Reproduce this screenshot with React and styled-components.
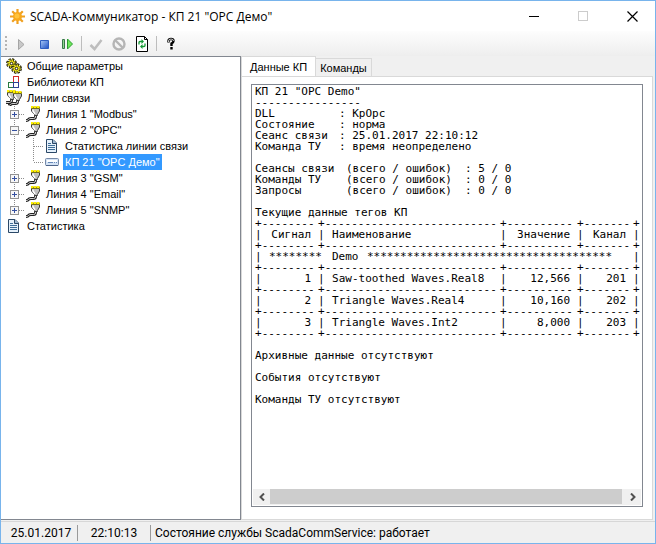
import React, { useState } from "react";
import styled, { createGlobalStyle } from "styled-components";

const Global = createGlobalStyle`
  *, *::before, *::after { box-sizing: border-box; }
  body { margin: 0; background: #f0f0f0; }
  button { border: 0; padding: 0; background: none; font: inherit; color: inherit; }
  svg { display: block; }
`;

const Window = styled.div`
  height: 100vh;
  display: flex;
  flex-direction: column;
  background: #f0f0f0;
  border: 1px solid #78b4ec;
  color: #000;
  font: 11px "Liberation Sans", Arial, sans-serif;
`;

const TitleBar = styled.header`
  flex: none;
  height: 30px;
  display: flex;
  align-items: center;
  gap: 4px;
  padding-left: 8px;
  background: #fff;
`;

const Title = styled.h1`
  flex: 1;
  margin: 0;
  font: 12px "Open Sans", "Noto Sans", sans-serif;
  white-space: nowrap;
`;

const CaptionButton = styled.button`
  width: 45px;
  height: 29px;
  display: grid;
  place-items: center;
`;

const Toolbar = styled.div`
  flex: none;
  height: 25px;
  display: flex;
  align-items: center;
  padding-left: 4px;
  background: linear-gradient(#fdfdfd, #eeeeee);
`;

const Grip = styled.span`
  width: 2px;
  height: 16px;
  margin-right: 2px;
  background: repeating-linear-gradient(#b4b4b4 0 2px, transparent 2px 4px);
`;

const ToolButton = styled.button`
  width: 23px;
  height: 22px;
  display: grid;
  place-items: center;
`;

const ToolSeparator = styled.span`
  width: 1px;
  height: 15px;
  margin: 0 2px 0 3px;
  background: #bdbdbd;
`;

const Main = styled.main`
  flex: 1;
  min-height: 0;
  display: grid;
  grid-template-columns: 240px minmax(0, 1fr);
`;

const Tree = styled.nav`
  border: solid #828790;
  border-width: 1px 1px 1px 0;
  background: #fff;
  padding: 1px 0 0 5px;
  overflow: hidden;
`;

const TreeRow = styled.div`
  height: 16px;
  display: flex;
  align-items: center;
`;

const IconCell = styled.span`
  flex: none;
  width: 19px;
`;

const TreeLabel = styled.button`
  height: 16px;
  padding: 0 2px;
  line-height: 16px;
  white-space: nowrap;
  background: ${(p) => (p.$selected ? "#3399ff" : "transparent")};
  color: ${(p) => (p.$selected ? "#fff" : "#000")};
`;

const Tabs = styled.section`
  min-width: 0;
  display: flex;
  flex-direction: column;
  padding-right: 2px;
`;

const TabList = styled.div`
  flex: none;
  height: 20px;
  display: flex;
  align-items: flex-end;
`;

const Tab = styled.button`
  height: ${(p) => (p.$active ? "21px" : "18px")};
  margin-bottom: ${(p) => (p.$active ? "-1px" : "0")};
  padding: 0 ${(p) => (p.$active ? "8px" : "4px")};
  border: 1px solid #d9d9d9;
  border-bottom: 0;
  border-left-width: ${(p) => (p.$active ? "1px" : "0")};
  background: ${(p) => (p.$active ? "#fff" : "#f0f0f0")};
  white-space: nowrap;
`;

const TabPanel = styled.div`
  flex: 1;
  min-height: 0;
  display: flex;
  padding: 7px 9px 12px;
  border: 1px solid #d9d9d9;
  background: #fff;
`;

const LogBox = styled.div`
  flex: 1;
  min-width: 0;
  display: flex;
  flex-direction: column;
  border: 1px solid #828790;
  padding: 1px;
`;

const Log = styled.div`
  flex: 1;
  min-height: 0;
  padding: 0 2px;
  overflow: hidden;
  font: 11px/11px "DejaVu Sans Mono", "Liberation Mono", monospace;
`;

const LogLine = styled.div`
  height: 11px;
  display: flex;
  white-space: pre;
`;

const LogLabel = styled.span`
  flex: none;
  width: ${(p) => p.$width};
`;

const TagTable = styled.table`
  width: 385px;
  table-layout: fixed;
  border-collapse: collapse;
  white-space: pre;

  th, td {
    height: 11px;
    padding: 0;
    font-weight: normal;
    text-align: left;
  }
`;

const Value = styled.td`
  && {
    text-align: right;
    padding-right: 7px;
  }
`;

const Marker = styled.span`
  display: inline-block;
  width: ${(p) => p.$width};
`;

const ScrollBar = styled.div`
  flex: none;
  height: 16px;
  display: flex;
  background: #f0f0f0;
`;

const ScrollButton = styled.button`
  width: 17px;
  display: grid;
  place-items: center;
`;

const ScrollThumb = styled.div`
  flex: 1;
  margin: 0 2px 1px 0;
  background: #cdcdcd;
`;

const StatusBar = styled.footer`
  flex: none;
  height: 22px;
  display: flex;
  align-items: center;
  border-top: 1px solid #d7d7d7;
  margin-top: 1px;
  padding-left: 4px;
  font: 12px Roboto, "Open Sans", sans-serif;
`;

const StatusItem = styled.span`
  width: ${(p) => p.$width || "auto"};
  padding: 0 4px;
  text-align: center;
  white-space: nowrap;
  border-left: ${(p) => (p.$divided ? "1px solid #9a9a9a" : "0")};
  line-height: 16px;
`;

const SunIcon = () => (
  <svg width="17" height="17" viewBox="0 0 17 17" aria-hidden="true">
    <path d="M8.5 1v15M1 8.500h15M3.200 3.200l10.600 10.600M13.800 3.200 3.200 13.800" stroke="#f0a020" strokeWidth="2.200" />
    <circle cx="8.500" cy="8.500" r="4.500" fill="#f8a81c" />
    <circle cx="8" cy="8" r="2.500" fill="#ffc23c" />
  </svg>
);

const Gear = ({ cx, cy }) => (
  <g>
    <circle cx={cx} cy={cy} r="4.300" fill="none" stroke="#1c1a04" strokeWidth="2.200" strokeDasharray="2.200 1.177" />
    <circle cx={cx} cy={cy} r="3.400" fill="#f0e61c" stroke="#1c1a04" strokeWidth="1" />
    <circle cx={cx} cy={cy} r="3.500" fill="none" stroke="#f6ec2a" strokeWidth="1.600" strokeDasharray="1.300 1.449" />
    <circle cx={cx} cy={cy} r="1.300" fill="#fff" stroke="#1c1a04" strokeWidth="1" />
  </g>
);

const GearsIcon = () => (
  <svg width="16" height="16" viewBox="0 0 16 16" aria-hidden="true">
    <Gear cx={5.5} cy={5.5} />
    <Gear cx={10.5} cy={10.5} />
  </svg>
);

const LibraryIcon = () => (
  <svg width="16" height="16" viewBox="0 0 16 16" fill="none" shapeRendering="crispEdges" aria-hidden="true">
    <path d="M7.500 2.500h5v6h-5z" stroke="#d42a2a" />
    <path d="M2.500 8.500h5v5h-5z" stroke="#287a40" />
    <path d="M7.500 8.500h5v5h-5z" stroke="#2f3f94" />
  </svg>
);

const PlugShape = () => (
  <>
    <path d="M10.500 9v2q0 1.500-2 1.500H6q-2 0-2.500 1T1 14.500" fill="none" stroke="#222" strokeWidth="2.800" />
    <path d="M10.500 9v2q0 1.500-2 1.500H6q-2 0-2.500 1T1 14.500" fill="none" stroke="#d0d0d0" strokeWidth="1" />
    <path d="M6.500 2.500h8V5l-2 3.500v1h-3v-1L6.500 5z" fill="#bebebe" stroke="#3c3c3c" />
    <path d="M8 3.500v1.500l2 3" fill="none" stroke="#fff" strokeWidth="1.500" />
    <path d="M6 1.500h9" stroke="#b3a600" strokeWidth="2" />
    <path d="M6 1h9" stroke="#fff000" strokeWidth="2" strokeDasharray="2 1" />
  </>
);

const PlugIcon = () => (
  <svg width="16" height="16" viewBox="0 0 16 16" aria-hidden="true"><PlugShape /></svg>
);

const PlugsIcon = () => (
  <svg width="17" height="16" viewBox="0 0 17 16" aria-hidden="true">
    <g transform="translate(-5)"><PlugShape /></g>
    <g transform="translate(1 1)"><PlugShape /></g>
  </svg>
);

const PageIcon = () => (
  <svg width="16" height="16" viewBox="0 0 16 16" aria-hidden="true">
    <path d="M2.500 1.500h6.500l3.500 3.500v9.500h-10z" fill="#e6f1fb" stroke="#2b4867" />
    <path d="M8.500 1.500v4h4" fill="#9db9d3" stroke="#2b4867" />
    <path d="M4 5.500h3M4 7.500h7M4 9.500h7M4 11.500h7" stroke="#3e6d98" />
  </svg>
);

const DeviceIcon = () => (
  <svg width="16" height="16" viewBox="0 0 16 16" aria-hidden="true">
    <rect x="1.500" y="4.500" width="13" height="7" rx="1" fill="#d4e3f5" stroke="#7589a8" />
    <path d="M2 11.500h12" stroke="#4d6388" />
    <path d="M3 7h10" stroke="#fff" strokeWidth="2" />
    <path d="M4 8.500h5M10 8.500h1M12 8.500h1" stroke="#6688b8" />
  </svg>
);

const icons = { gears: GearsIcon, library: LibraryIcon, plugs: PlugsIcon, plug: PlugIcon, page: PageIcon, device: DeviceIcon };

function Guide({ kind, last }) {
  return (
    <svg width="19" height="16" viewBox="0 0 19 16" fill="none" shapeRendering="crispEdges" aria-hidden="true">
      <path d={last ? "M8.500 0v8" : "M8.500 0v16"} stroke="#8c8c8c" strokeDasharray="1 1" />
      {kind !== "line" && <path d="M9 8.500h10" stroke="#8c8c8c" strokeDasharray="1 1" />}
      {(kind === "plus" || kind === "minus") && (
        <>
          <rect x="4.500" y="4.500" width="8" height="8" fill="#f7f7f7" stroke="#929292" />
          <path d={kind === "plus" ? "M6 8.500h5M8.500 6v5" : "M6 8.500h5"} stroke="#3550a0" />
        </>
      )}
    </svg>
  );
}

const nodes = [
  { icon: "gears", text: "Общие параметры", guides: [] },
  { icon: "library", text: "Библиотеки КП", guides: [] },
  { icon: "plugs", text: "Линии связи", guides: [] },
  { icon: "plug", text: 'Линия 1 "Modbus"', guides: ["plus"] },
  { icon: "plug", text: 'Линия 2 "OPC"', guides: ["minus"] },
  { icon: "page", text: "Статистика линии связи", guides: ["line", "tee"] },
  { icon: "device", text: 'КП 21 "OPC Демо"', guides: ["line", "tee"], last: true },
  { icon: "plug", text: 'Линия 3 "GSM"', guides: ["plus"] },
  { icon: "plug", text: 'Линия 4 "Email"', guides: ["plus"] },
  { icon: "plug", text: 'Линия 5 "SNMP"', guides: ["plus"], last: true },
  { icon: "page", text: "Статистика", guides: [] },
];

const state = [
  ["DLL", ": КрОрс"],
  ["Состояние", ": норма"],
  ["Сеанс связи", ": 25.01.2017 22:10:12"],
  ["Команда ТУ", ": время неопределено"],
];

const counters = [
  ["Сеансы связи", ": 5 / 0"],
  ["Команды ТУ", ": 0 / 0"],
  ["Запросы", ": 0 / 0"],
];

const tags = [
  ["1", "Saw-toothed Waves.Real8", "12,566", "201"],
  ["2", "Triangle Waves.Real4", "10,160", "202"],
  ["3", "Triangle Waves.Int2", "8,000", "203"],
];

const columnWidths = [14, 49, 14, 168, 14, 63, 14, 42, 7];

const Column = styled.col`
  width: ${(p) => p.$width}px;
`;

const Rule = () => (
  <tr>
    {[8, 26, 10, 7].map((n) => (
      <td key={n} colSpan={2}>+{"-".repeat(n)}</td>
    ))}
    <td>+</td>
  </tr>
);

function TagRow({ cells, header }) {
  const Name = header ? "th" : "td";
  return (
    <tr>
      <td>|</td>
      <Value as={Name}>{cells[0]}</Value>
      <td>|</td>
      <Name>{cells[1]}</Name>
      <td>|</td>
      <Value as={Name}>{cells[2]}</Value>
      <td>|</td>
      <Value as={Name}>{cells[3]}</Value>
      <td>|</td>
    </tr>
  );
}

export default function App() {
  const [selected, setSelected] = useState(6);
  return (
    <>
      <Global />
      <Window>
        <TitleBar>
          <SunIcon />
          <Title>SCADA-Коммуникатор - КП 21 "ОРС Демо"</Title>
          <CaptionButton aria-label="Свернуть">
            <svg width="11" height="11" shapeRendering="crispEdges"><path d="M0 5.500h10" stroke="#000" /></svg>
          </CaptionButton>
          <CaptionButton aria-label="Развернуть" disabled>
            <svg width="11" height="11" shapeRendering="crispEdges"><path d="M.5 .5h9v9h-9z" fill="none" stroke="#ccc" /></svg>
          </CaptionButton>
          <CaptionButton aria-label="Закрыть">
            <svg width="11" height="11"><path d="m.5.5 10 10m0-10-10 10" stroke="#000" strokeWidth="1.200" /></svg>
          </CaptionButton>
        </TitleBar>

        <Toolbar role="toolbar">
          <Grip />
          <ToolButton aria-label="Запустить" disabled>
            <svg width="16" height="16"><path d="M5.500 3.500 11 8.500l-5.500 5z" fill="#c8c8c8" stroke="#a5a5a5" /></svg>
          </ToolButton>
          <ToolButton aria-label="Остановить">
            <svg width="16" height="16">
              <defs><linearGradient id="stop" x1="0" y1="0" x2="1" y2="1"><stop stopColor="#a9c9f5" /><stop offset="1" stopColor="#1d4fc4" /></linearGradient></defs>
              <path d="M4.500 4.500h8v8h-8z" fill="url(#stop)" stroke="#2f5ec0" />
            </svg>
          </ToolButton>
          <ToolButton aria-label="Перезапустить">
            <svg width="16" height="16">
              <path d="M3.500 3.500h2v9h-2z" fill="#8ed88c" stroke="#39784a" />
              <path d="M8.500 3 13.500 8l-5 5z" fill="#6ee65a" stroke="#2a9e30" />
            </svg>
          </ToolButton>
          <ToolSeparator />
          <ToolButton aria-label="Применить" disabled>
            <svg width="16" height="16"><path d="m2.500 9 4 4L13.500 4" fill="none" stroke="#bdbdbd" strokeWidth="2.500" /></svg>
          </ToolButton>
          <ToolButton aria-label="Отменить" disabled>
            <svg width="16" height="16" fill="none" stroke="#b5b5b5" strokeWidth="2.400"><circle cx="8" cy="8" r="5.500" /><path d="m4 4 8 8" /></svg>
          </ToolButton>
          <ToolButton aria-label="Обновить">
            <svg width="16" height="16">
              <path d="M2.500.5h8l3 3v12h-11z" fill="#fff" stroke="#000" />
              <path d="M10.500.5v3h3" fill="none" stroke="#000" />
              <path d="M5 8.500V6.500q0-1 1-1h2M11 7.500v2q0 1-1 1H8" fill="none" stroke="#159a35" strokeWidth="1.300" />
              <path d="M7.500 3v5L10 5.500zM8.500 8v5L6 10.500z" fill="#159a35" />
            </svg>
          </ToolButton>
          <ToolSeparator />
          <ToolButton aria-label="О программе">
            <svg width="16" height="16" fill="none">
              <path d="M5.500 6.500V5q0-2 2.500-2t2.500 2q0 1.500-2 2.500v2.500m0 1v2.500" stroke="#000" strokeWidth="2.400" />
              <path d="M5.500 6V5q0-2 2.500-2t2.500 2" stroke="#fff" strokeWidth=".8" />
            </svg>
          </ToolButton>
        </Toolbar>

        <Main>
          <Tree aria-label="Параметры">
            {nodes.map((node, i) => {
              const Icon = icons[node.icon];
              return (
                <TreeRow key={node.text}>
                  {node.guides.map((kind, g) => (
                    <Guide key={g} kind={kind} last={node.last && g === node.guides.length - 1} />
                  ))}
                  <IconCell><Icon /></IconCell>
                  <TreeLabel $selected={i === selected} onClick={() => setSelected(i)}>{node.text}</TreeLabel>
                </TreeRow>
              );
            })}
          </Tree>

          <Tabs>
            <TabList role="tablist">
              <Tab role="tab" aria-selected="true" $active>Данные КП</Tab>
              <Tab role="tab" aria-selected="false">Команды</Tab>
            </TabList>
            <TabPanel role="tabpanel">
              <LogBox>
                <Log>
                  <LogLine>КП 21 "OPC Demo"</LogLine>
                  <LogLine>{"-".repeat(16)}</LogLine>
                  {state.map(([label, value]) => (
                    <LogLine key={label}><LogLabel $width="84px">{label}</LogLabel>{value}</LogLine>
                  ))}
                  <LogLine />
                  {counters.map(([label, value]) => (
                    <LogLine key={label}>
                      <LogLabel $width="91px">{label}</LogLabel>
                      <LogLabel $width="119px">(всего / ошибок)</LogLabel>
                      {value}
                    </LogLine>
                  ))}
                  <LogLine />
                  <LogLine>Текущие данные тегов КП</LogLine>
                  <TagTable>
                    <colgroup>
                      {columnWidths.map((w, i) => <Column key={i} $width={w} />)}
                    </colgroup>
                    <tbody>
                      <Rule />
                      <TagRow header cells={["Сигнал", "Наименование", "Значение", "Канал"]} />
                      <Rule />
                      <tr>
                        <td>|</td>
                        <td colSpan={7}>
                          <Marker $width="63px">{"*".repeat(8)}</Marker>
                          <Marker $width="35px">Demo</Marker>
                          {"*".repeat(37)}
                        </td>
                        <td>|</td>
                      </tr>
                      <Rule />
                      {tags.map((cells) => (
                        <React.Fragment key={cells[0]}>
                          <TagRow cells={cells} />
                          <Rule />
                        </React.Fragment>
                      ))}
                    </tbody>
                  </TagTable>
                  <LogLine />
                  <LogLine>Архивные данные отсутствуют</LogLine>
                  <LogLine />
                  <LogLine>События отсутствуют</LogLine>
                  <LogLine />
                  <LogLine>Команды ТУ отсутствуют</LogLine>
                </Log>
                <ScrollBar>
                  <ScrollButton aria-label="Прокрутить влево">
                    <svg width="8" height="8"><path d="M6 .5 2.500 4 6 7.500" fill="none" stroke="#505050" strokeWidth="2" /></svg>
                  </ScrollButton>
                  <ScrollThumb />
                  <ScrollButton aria-label="Прокрутить вправо">
                    <svg width="8" height="8"><path d="M2 .5 5.500 4 2 7.500" fill="none" stroke="#505050" strokeWidth="2" /></svg>
                  </ScrollButton>
                </ScrollBar>
              </LogBox>
            </TabPanel>
          </Tabs>
        </Main>

        <StatusBar>
          <StatusItem $width="72px">25.01.2017</StatusItem>
          <StatusItem $width="73px" $divided>22:10:13</StatusItem>
          <StatusItem $divided>Состояние службы ScadaCommService: работает</StatusItem>
        </StatusBar>
      </Window>
    </>
  );
}
